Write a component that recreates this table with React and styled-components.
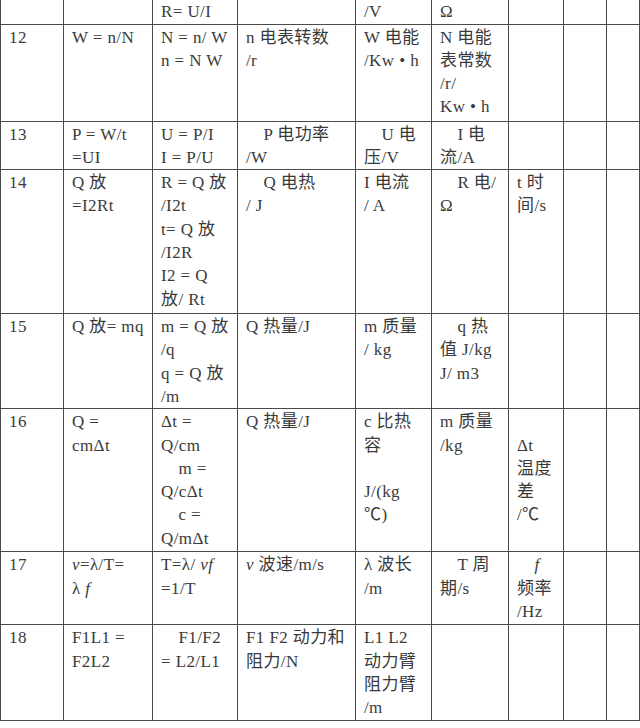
import React from "react";
import styled, { createGlobalStyle } from "styled-components";

const GlobalStyle = createGlobalStyle`
  html, body {
    margin: 0;
    padding: 0;
    background: #ffffff;
  }
`;

const Page = styled.div`
  width: 640px;
  height: 728px;
  overflow: hidden;
  background: #ffffff;
`;

const Table = styled.table`
  width: 639px;
  table-layout: fixed;
  border-collapse: collapse;
  font-family: "Liberation Serif", "Noto Sans CJK SC", serif;
  font-size: 17px;
  letter-spacing: 0.4px;
  color: #3a3a3a;
`;

const Col = styled.col`
  width: ${(p) => p.$w}px;
`;

const Row = styled.tr`
  height: ${(p) => p.$h}px;
`;

const Cell = styled.td`
  border: 1.5px solid #4a4a4a;
  border-top: ${(p) => (p.$open ? "none" : "1.5px solid #4a4a4a")};
  padding: ${(p) => (p.$open ? "0" : "1px")} 2px 0 8px;
  vertical-align: top;
  overflow: hidden;
`;

const Line = styled.div`
  line-height: 23.3px;
  height: 23.3px;
  white-space: pre;
`;

const It = styled.i`
  font-family: "Liberation Serif", serif;
  font-style: italic;
`;

const widths = [63, 89, 85, 118, 76, 77, 55, 43, 33];

const rows = [
  { h: 24, open: true, cells: [[], [], ["R= U/I"], [], ["/V"], ["Ω"], [], [], []] },
  {
    h: 97,
    cells: [
      ["12"],
      ["W = n/N"],
      ["N = n/ W", "n = N W"],
      ["n 电表转数", "/r"],
      ["W 电能", "/Kw • h"],
      ["N 电能", "表常数", "/r/", "Kw • h"],
      [], [], [],
    ],
  },
  {
    h: 48,
    cells: [
      ["13"],
      ["P = W/t", "=UI"],
      ["U = P/I", "I = P/U"],
      ["　P 电功率", "/W"],
      ["　U 电", "压/V"],
      ["　I 电", "流/A"],
      [], [], [],
    ],
  },
  {
    h: 144,
    cells: [
      ["14"],
      ["Q 放", "=I2Rt"],
      ["R = Q 放", "/I2t", "t= Q 放", "/I2R", "I2 = Q", "放/ Rt"],
      ["　Q 电热", "/ J"],
      ["I 电流", "/ A"],
      ["　R 电/", "Ω"],
      ["t 时", "间/s"],
      [], [],
    ],
  },
  {
    h: 95,
    cells: [
      ["15"],
      ["Q 放= mq"],
      ["m = Q 放", "/q", "q = Q 放", "/m"],
      ["Q 热量/J"],
      ["m 质量", "/ kg"],
      ["　q 热", "值 J/kg", "J/ m3"],
      [], [], [],
    ],
  },
  {
    h: 143,
    cells: [
      ["16"],
      ["Q =", "cmΔt"],
      ["Δt =", "Q/cm", "　m =", "Q/cΔt", "　c =", "Q/mΔt"],
      ["Q 热量/J"],
      ["c 比热", "容", "", "J/(kg", "℃)"],
      ["m 质量", "/kg"],
      ["", "Δt", "温度", "差", "/℃"],
      [], [],
    ],
  },
  {
    h: 73,
    cells: [
      ["17"],
      [<><It>v</It>=λ/T=</>, <>λ <It>f</It></>],
      [<>T=λ/ <It>vf</It></>, "=1/T"],
      [<><It>v</It> 波速/m/s</>],
      ["λ 波长", "/m"],
      ["　T 周", "期/s"],
      [<>　<It>f</It></>, "频率", "/Hz"],
      [], [],
    ],
  },
  {
    h: 96,
    cells: [
      ["18"],
      ["F1L1 =", "F2L2"],
      ["　F1/F2", "= L2/L1"],
      ["F1 F2 动力和", "阻力/N"],
      ["L1 L2", "动力臂", "阻力臂", "/m"],
      [], [], [], [],
    ],
  },
];

export default function App() {
  return (
    <Page>
      <GlobalStyle />
      <Table>
        <colgroup>
          {widths.map((w, i) => (
            <Col key={i} $w={w} />
          ))}
        </colgroup>
        <tbody>
          {rows.map((row, r) => (
            <Row key={r} $h={row.h}>
              {row.cells.map((lines, c) => (
                <Cell key={c} $open={row.open}>
                  {lines.map((l, k) => (
                    <Line key={k}>{l}</Line>
                  ))}
                </Cell>
              ))}
            </Row>
          ))}
        </tbody>
      </Table>
    </Page>
  );
}
